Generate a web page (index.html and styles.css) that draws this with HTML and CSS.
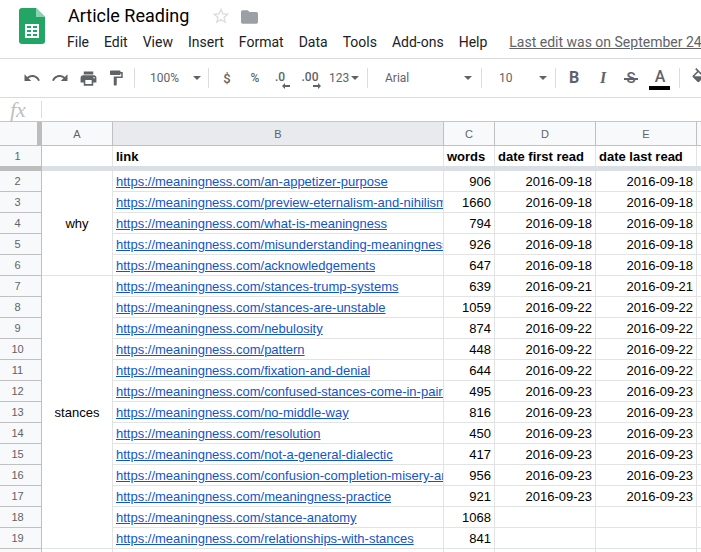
FILE: index.html
```html
<!DOCTYPE html>
<html lang="en">
<head>
<meta charset="utf-8">
<title>Article Reading</title>
<link rel="stylesheet" href="styles.css">
</head>
<body>
<header class="top">
  <svg class="logo" viewBox="0 0 26 36" width="26" height="36"><path fill="#23a566" d="M3 0h14l9 9v24a3 3 0 0 1-3 3H3a3 3 0 0 1-3-3V3a3 3 0 0 1 3-3z"/><path fill="#8ed1b1" d="M17 0l9 9h-9z"/><path fill="#fff" d="M6 16h14v14H6z"/><path fill="#23a566" d="M8 18h4v2H8zM14 18h4v2h-4zM8 22h4v2H8zM14 22h4v2h-4zM8 26h4v2H8zM14 26h4v2h-4z"/></svg>
  <div class="titles">
    <div class="title-row">
      <span class="doc-title">Article Reading</span>
      <svg class="star" viewBox="0 0 24 24" width="20" height="20"><path fill="#dadce0" d="M22 9.24l-7.19-.62L12 2 9.19 8.63 2 9.24l5.46 4.73L5.82 21 12 17.27 18.18 21l-1.63-7.03L22 9.24zM12 15.4l-3.76 2.27 1-4.28-3.32-2.88 4.38-.38L12 6.1l1.71 4.04 4.38.38-3.32 2.88 1 4.28L12 15.4z"/></svg>
      <svg class="folder" viewBox="2 4 20 16" width="17" height="14"><path fill="#9aa0a6" d="M10 4H4c-1.1 0-1.99.9-1.99 2L2 18c0 1.1.9 2 2 2h16c1.1 0 2-.9 2-2V8c0-1.1-.9-2-2-2h-8l-2-2z"/></svg>
    </div>
    <nav class="menu">
      <span>File</span><span>Edit</span><span>View</span><span>Insert</span><span>Format</span><span>Data</span><span>Tools</span><span>Add-ons</span><span>Help</span>
      <span class="last-edit">Last edit was on September 24</span>
    </nav>
  </div>
</header>

<div class="toolbar">
  <span class="btn"><svg viewBox="0 0 24 24" width="18" height="18"><path d="M12.5 8c-2.65 0-5.05.99-6.9 2.6L2 7v9h9l-3.62-3.62c1.39-1.16 3.16-1.88 5.12-1.88 3.54 0 6.55 2.31 7.6 5.5l2.37-.78C21.08 11.03 17.15 8 12.5 8z"/></svg></span>
  <span class="btn"><svg viewBox="0 0 24 24" width="18" height="18"><path d="M18.4 10.6C16.55 8.99 14.15 8 11.5 8c-4.65 0-8.58 3.03-9.96 7.22L3.9 16c1.05-3.19 4.05-5.5 7.6-5.5 1.95 0 3.73.72 5.12 1.88L13 16h9V7l-3.6 3.6z"/></svg></span>
  <span class="btn"><svg viewBox="0 0 24 24" width="19" height="19"><path d="M19 8H5c-1.66 0-3 1.34-3 3v6h4v4h12v-4h4v-6c0-1.66-1.34-3-3-3zm-3 11H8v-5h8v5zm3-7c-.55 0-1-.45-1-1s.45-1 1-1 1 .45 1 1-.45 1-1 1zm-1-9H6v4h12V3z"/></svg></span>
  <span class="btn"><svg viewBox="0 0 24 24" width="18" height="18"><path d="M18 4V3c0-.55-.45-1-1-1H5c-.55 0-1 .45-1 1v4c0 .55.45 1 1 1h12c.55 0 1-.45 1-1V6h1v4H9v11c0 .55.45 1 1 1h2c.55 0 1-.45 1-1v-9h8V4h-3z"/></svg></span>
  <i class="sep s1"></i>
  <span class="drop d-zoom"><span>100%</span><i class="caret"></i></span>
  <i class="sep"></i>
  <span class="btn tx dollar">$</span>
  <span class="btn tx small">%</span>
  <span class="btn dec narrow"><span>.0</span><svg class="dec-arrow" viewBox="0 0 8 6" width="8" height="6"><path d="M3 0v2h5v2H3v2L0 3z"/></svg></span>
  <span class="btn dec wide"><span>.00</span><svg class="dec-arrow" viewBox="0 0 8 6" width="8" height="6"><path d="M5 0v2H0v2h5v2l3-3z"/></svg></span>
  <span class="drop d-num"><span>123</span><i class="caret"></i></span>
  <i class="sep"></i>
  <span class="drop d-font"><span>Arial</span><i class="caret"></i></span>
  <i class="sep"></i>
  <span class="drop d-size"><span>10</span><i class="caret"></i></span>
  <i class="sep"></i>
  <span class="btn fmt bold">B</span>
  <span class="btn fmt ital">I</span>
  <span class="btn fmt strike">S</span>
  <span class="btn fmt color">A<i class="color-bar"></i></span>
  <i class="sep s2"></i>
  <span class="btn"><svg viewBox="0 0 24 24" width="20" height="20"><path d="M16.56 8.94L7.62 0 6.21 1.41l2.38 2.38-5.15 5.15c-.59.59-.59 1.54 0 2.12l5.5 5.5c.29.29.68.44 1.06.44s.77-.15 1.06-.44l5.5-5.5c.59-.58.59-1.53 0-2.11zM5.21 10L10 5.21 14.79 10H5.21z"/></svg></span>
</div>

<div class="formula"><span class="fx">fx</span><i class="fx-sep"></i></div>

<main class="sheet">
  <div class="corner"></div><div class="ch">A</div><div class="ch sel">B</div><div class="ch">C</div><div class="ch">D</div><div class="ch">E</div><div class="ch last"></div>

  <div class="rh r1">1</div><div class="c r1"></div><div class="c r1 b">link</div><div class="c r1 b">words</div><div class="c r1 b">date first read</div><div class="c r1 b">date last read</div><div class="c r1"></div>

  <div class="fz fz-h"></div><div class="fz"></div><div class="fz"></div><div class="fz"></div><div class="fz"></div><div class="fz"></div><div class="fz"></div>

  <div class="rh">2</div><div class="c m span5">why</div><div class="c"><a>https://meaningness.com/an-appetizer-purpose</a></div><div class="c n">906</div><div class="c n">2016-09-18</div><div class="c n">2016-09-18</div><div class="c"></div>
  <div class="rh">3</div><div class="c"><a>https://meaningness.com/preview-eternalism-and-nihilism-preview</a></div><div class="c n">1660</div><div class="c n">2016-09-18</div><div class="c n">2016-09-18</div><div class="c"></div>
  <div class="rh">4</div><div class="c"><a>https://meaningness.com/what-is-meaningness</a></div><div class="c n">794</div><div class="c n">2016-09-18</div><div class="c n">2016-09-18</div><div class="c"></div>
  <div class="rh">5</div><div class="c"><a>https://meaningness.com/misunderstanding-meaningness</a></div><div class="c n">926</div><div class="c n">2016-09-18</div><div class="c n">2016-09-18</div><div class="c"></div>
  <div class="rh">6</div><div class="c"><a>https://meaningness.com/acknowledgements</a></div><div class="c n">647</div><div class="c n">2016-09-18</div><div class="c n">2016-09-18</div><div class="c"></div>

  <div class="rh">7</div><div class="c m span13">stances</div><div class="c"><a>https://meaningness.com/stances-trump-systems</a></div><div class="c n">639</div><div class="c n">2016-09-21</div><div class="c n">2016-09-21</div><div class="c"></div>
  <div class="rh">8</div><div class="c"><a>https://meaningness.com/stances-are-unstable</a></div><div class="c n">1059</div><div class="c n">2016-09-22</div><div class="c n">2016-09-22</div><div class="c"></div>
  <div class="rh">9</div><div class="c"><a>https://meaningness.com/nebulosity</a></div><div class="c n">874</div><div class="c n">2016-09-22</div><div class="c n">2016-09-22</div><div class="c"></div>
  <div class="rh">10</div><div class="c"><a>https://meaningness.com/pattern</a></div><div class="c n">448</div><div class="c n">2016-09-22</div><div class="c n">2016-09-22</div><div class="c"></div>
  <div class="rh">11</div><div class="c"><a>https://meaningness.com/fixation-and-denial</a></div><div class="c n">644</div><div class="c n">2016-09-22</div><div class="c n">2016-09-22</div><div class="c"></div>
  <div class="rh">12</div><div class="c"><a>https://meaningness.com/confused-stances-come-in-pairs</a></div><div class="c n">495</div><div class="c n">2016-09-23</div><div class="c n">2016-09-23</div><div class="c"></div>
  <div class="rh">13</div><div class="c"><a>https://meaningness.com/no-middle-way</a></div><div class="c n">816</div><div class="c n">2016-09-23</div><div class="c n">2016-09-23</div><div class="c"></div>
  <div class="rh">14</div><div class="c"><a>https://meaningness.com/resolution</a></div><div class="c n">450</div><div class="c n">2016-09-23</div><div class="c n">2016-09-23</div><div class="c"></div>
  <div class="rh">15</div><div class="c"><a>https://meaningness.com/not-a-general-dialectic</a></div><div class="c n">417</div><div class="c n">2016-09-23</div><div class="c n">2016-09-23</div><div class="c"></div>
  <div class="rh">16</div><div class="c"><a>https://meaningness.com/confusion-completion-misery-and-more</a></div><div class="c n">956</div><div class="c n">2016-09-23</div><div class="c n">2016-09-23</div><div class="c"></div>
  <div class="rh">17</div><div class="c"><a>https://meaningness.com/meaningness-practice</a></div><div class="c n">921</div><div class="c n">2016-09-23</div><div class="c n">2016-09-23</div><div class="c"></div>
  <div class="rh">18</div><div class="c"><a>https://meaningness.com/stance-anatomy</a></div><div class="c n">1068</div><div class="c n"></div><div class="c n"></div><div class="c"></div>
  <div class="rh">19</div><div class="c"><a>https://meaningness.com/relationships-with-stances</a></div><div class="c n">841</div><div class="c n"></div><div class="c n"></div><div class="c"></div>
  <div class="rh"></div><div class="c"></div><div class="c"></div><div class="c"></div><div class="c"></div><div class="c"></div><div class="c"></div>
</main>
</body>
</html>
```

FILE: styles.css
```css
* { box-sizing: border-box; }
html, body { margin: 0; height: 100%; }
body {
  width: 701px;
  height: 552px;
  overflow: hidden;
  background: #fff;
  font-family: Roboto, "Liberation Sans", sans-serif;
  display: flex;
  flex-direction: column;
  color: #202124;
}

/* Title area */
.top {
  height: 59px;
  flex: none;
  display: flex;
  padding: 8px 0 0 19px;
  border-bottom: 1px solid #dadce0;
  overflow: hidden;
}
.logo { flex: none; }
.titles { margin-left: 22px; flex: 1; min-width: 0; }
.title-row { height: 20px; display: flex; align-items: center; white-space: nowrap; margin-top: -2px; }
.doc-title { font-size: 18px; line-height: 20px; color: #000; width: 144px; padding-left: 1px; }
.star { flex: none; margin-right: 10px; }
.folder { flex: none; margin-top: 1px; }
.menu {
  display: flex;
  gap: 15px;
  margin-top: 6px;
  font-size: 14px;
  line-height: 20px;
  white-space: nowrap;
}
.last-edit { color: #5f6368; text-decoration: underline; margin-left: 7px; }

/* Toolbar */
.toolbar {
  height: 39px;
  flex: none;
  display: flex;
  align-items: center;
  padding-left: 18px;
  border-bottom: 1px solid #dadce0;
  color: #5f6368;
  font-size: 12px;
  white-space: nowrap;
  overflow: hidden;
}
.btn {
  width: 28px;
  height: 24px;
  flex: none;
  display: flex;
  align-items: center;
  justify-content: center;
  position: relative;
}
.btn svg { fill: #5f6368; }
.tx { font-size: 13px; font-weight: 500; }
.dollar { margin-left: 4px; }
.small { font-size: 12px; }
.sep {
  width: 1px;
  height: 20px;
  flex: none;
  background: #dadce0;
}
.s1 { margin-left: 4px; }
.s2 { margin-left: 5px; margin-right: 6px; }
.drop { display: flex; align-items: center; flex: none; height: 24px; }
.caret {
  width: 0;
  height: 0;
  border-left: 4px solid transparent;
  border-right: 4px solid transparent;
  border-top: 4px solid #5f6368;
  margin-left: auto;
}
.d-zoom { width: 73px; padding: 0 7px 0 15px; }
.d-num { width: 38px; padding-right: 9px; margin-left: 5px; gap: 2px; }
.d-font { width: 113px; padding: 0 9px 0 17px; }
.d-size { width: 73px; padding: 0 8px 0 17px; }
.dec { width: 26px; font-size: 12px; font-weight: 500; align-items: flex-start; padding-top: 4px; }
.narrow { padding-right: 4px; }
.narrow .dec-arrow { right: 5px; }
.wide { width: 28px; margin-left: 1px; }
.dec-arrow { position: absolute; right: 3px; bottom: 1px; }
.fmt { font-size: 16px; line-height: 24px; }
.bold { font-weight: 700; margin-left: 4px; }
.ital { font-family: "Liberation Serif", serif; font-style: italic; font-weight: 700; margin-left: 1px; }
.strike { font-weight: 500; font-size: 15px; }
.strike::after {
  content: "";
  position: absolute;
  left: 7px;
  right: 7px;
  top: 12px;
  height: 1.5px;
  background: #5f6368;
}
.color { font-weight: 500; align-items: flex-start; line-height: 22px; margin-left: 1px; }
.color-bar {
  position: absolute;
  left: 3px;
  bottom: 0;
  width: 21px;
  height: 4px;
  background: #000;
}

/* Formula bar */
.formula {
  height: 24px;
  flex: none;
  display: flex;
  align-items: center;
  border-bottom: 1px solid #c4c7c9;
}
.fx {
  width: 41px;
  padding-left: 10px;
  font-family: "Liberation Serif", serif;
  font-style: italic;
  font-size: 22px;
  line-height: 22px;
  color: #c0c0c0;
}
.fx-sep { width: 1px; height: 17px; background: #dadce0; }

/* Sheet */
.sheet {
  flex: 1;
  min-height: 0;
  overflow: hidden;
  display: grid;
  grid-template-columns: 42px 71px 331px 51px 101px 101px 5px;
  grid-template-rows: 24px 20px 5px repeat(19, 21px);
  font-family: "Liberation Sans", Arial, sans-serif;
  font-size: 13px;
  color: #000;
}
.corner {
  background: #f8f9fa;
  border-right: 5px solid #bdbdbd;
  border-bottom: 1px solid #c0c0c0;
}
.ch {
  display: flex;
  align-items: center;
  justify-content: center;
  background: #f8f9fa;
  border-right: 1px solid #c0c0c0;
  border-bottom: 1px solid #c0c0c0;
  color: #5f6368;
  font-size: 11px;
  padding-top: 1px;
}
.ch.sel { background: #e8eaed; }
.ch.last { border-right: 0; }
.rh {
  display: flex;
  align-items: center;
  justify-content: center;
  background: #f8f9fa;
  border-right: 1px solid #c0c0c0;
  border-bottom: 1px solid #c0c0c0;
  color: #5f6368;
  font-size: 11px;
  padding-right: 6px;
}
.rh.r1 { border-bottom: 0; }
.c {
  display: flex;
  align-items: center;
  padding: 2px 3px 0;
  overflow: hidden;
  white-space: nowrap;
  border-right: 1px solid #e2e3e3;
  border-bottom: 1px solid #e2e3e3;
  line-height: 18px;
}
.c.r1 { border-bottom: 0; }
.c a { color: #1155cc; text-decoration: underline; min-width: 0; overflow: hidden; margin-right: -3px; }
.b { font-weight: 700; }
.n { justify-content: flex-end; }
.m { justify-content: center; }
.span5 { grid-row: span 5; }
.span13 { grid-row: span 13; }
.fz { background: #dadfe5; }
.fz-h { background: #bdbdbd; border-right: 1px solid #bdbdbd; }
```
